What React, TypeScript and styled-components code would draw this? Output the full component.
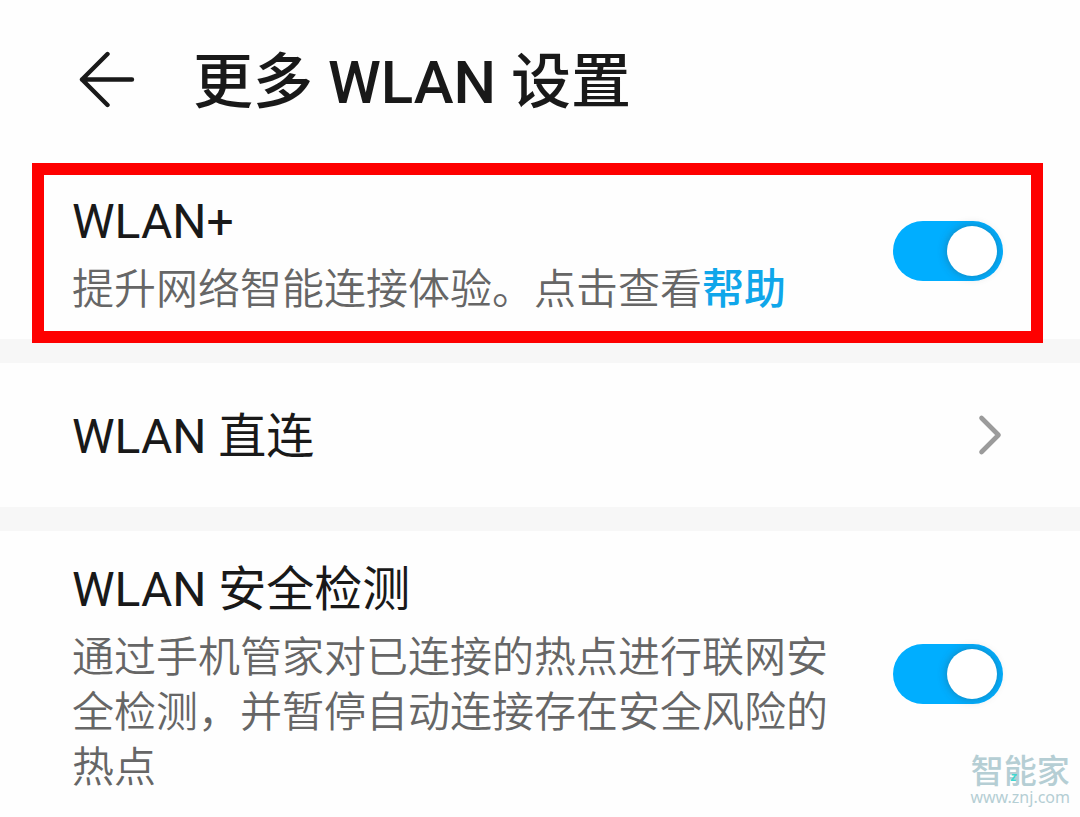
import React from 'react';
import styled, { createGlobalStyle } from 'styled-components';

const GlobalStyle = createGlobalStyle`
  *, *::before, *::after { box-sizing: border-box; }
  body {
    margin: 0;
    background: #fefefe;
    color: #191919;
    font-family: Roboto, "Noto Sans CJK SC", sans-serif;
  }
`;

const Page = styled.main`
  position: relative;
  display: flex;
  flex-direction: column;
  min-height: 100vh;
`;

const Header = styled.header`
  display: flex;
  align-items: center;
  gap: 57px;
  padding: 35px 72px;
  margin-bottom: 5px;
`;

const BackButton = styled.button`
  display: flex;
  padding: 0;
  margin-left: 6px;
  border: 0;
  background: none;
  color: inherit;
  cursor: pointer;
`;

const Title = styled.h1`
  margin: 0;
  padding-top: 8px;
  font-size: 60px;
  font-weight: 500;
  line-height: 80px;
`;

const Highlight = styled.div`
  position: relative;
  z-index: 1;
  margin: 0 37px -4px 32px;
  padding: 9px 28px 14px;
  border: 12px solid #fe0000;
`;

const Section = styled.section`
  padding: 21px 77px 20px 72px;
`;

const Row = styled.div`
  display: flex;
  align-items: center;
  gap: 60px;
`;

const LinkRow = styled.a`
  display: flex;
  align-items: center;
  justify-content: space-between;
  padding: 38px 77px 38px 72px;
  color: inherit;
  text-decoration: none;
`;

const Texts = styled.div`
  flex: 1;
  display: flex;
  flex-direction: column;
  gap: 8px;
  padding-top: 6px;
`;

const Label = styled.label`
  font-size: 48px;
  line-height: 64px;
`;

const LinkLabel = styled.span`
  padding-top: 4px;
  font-size: 48px;
  line-height: 64px;
`;

const Description = styled.p`
  margin: 0;
  color: #666;
  font-size: 42px;
  font-weight: 350;
  line-height: 55px;
`;

const HelpLink = styled.a`
  color: #0fa6ea;
  font-weight: 500;
  text-decoration: none;
`;

const Toggle = styled.input`
  appearance: none;
  flex: none;
  display: flex;
  align-items: center;
  width: 110px;
  height: 60px;
  margin: 0;
  padding: 0 6px;
  border-radius: 30px;
  background: #ccc;
  cursor: pointer;

  &::before {
    content: "";
    width: 50px;
    height: 50px;
    border-radius: 50%;
    background: #fff;
    box-shadow: 0 0 10px rgba(60, 60, 60, 0.4);
  }

  &:checked {
    justify-content: flex-end;
    background: #00aeff;
  }
`;

const Divider = styled.hr`
  width: 100%;
  height: 24px;
  margin: 0;
  border: 0;
  background: #f7f7f7;
`;

const Watermark = styled.aside`
  position: absolute;
  right: 10px;
  bottom: 11px;
  display: flex;
  flex-direction: column;
  align-items: center;
  color: #b5ced4;
`;

const Brand = styled.span`
  position: relative;
  font-size: 33px;
  font-weight: 500;
  line-height: 32px;
`;

const BrandMark = styled.span`
  position: absolute;
  left: 40px;
  top: 15px;
  color: #3fd6d0;
  font-size: 12px;
  font-style: italic;
  font-weight: 700;
  line-height: 12px;
`;

const Site = styled.span`
  font-family: "Noto Sans", sans-serif;
  font-size: 16px;
  line-height: 18px;
`;

export default function App() {
  return (
    <>
      <GlobalStyle />
      <Page>
        <Header>
          <BackButton aria-label="返回">
            <svg width="58" height="58" viewBox="0 0 58 58" fill="none" stroke="currentColor" strokeWidth="4.4" strokeLinecap="round" strokeLinejoin="round">
              <path d="M29.5 4 4 29.5 29.5 55M4 29.5H54" />
            </svg>
          </BackButton>
          <Title>更多 WLAN 设置</Title>
        </Header>

        <Highlight>
          <Row>
            <Texts>
              <Label htmlFor="wlan-plus">WLAN+</Label>
              <Description>
                提升网络智能连接体验。点击查看<HelpLink href="#help">帮助</HelpLink>
              </Description>
            </Texts>
            <Toggle id="wlan-plus" type="checkbox" defaultChecked />
          </Row>
        </Highlight>
        <Divider />

        <LinkRow href="#wlan-direct">
          <LinkLabel>WLAN 直连</LinkLabel>
          <svg width="26" height="42" viewBox="0 0 26 42" fill="none" stroke="#9b9b9b" strokeWidth="4.6" strokeLinecap="round" strokeLinejoin="round">
            <path d="M4.5 4 21.5 21 4.5 38" />
          </svg>
        </LinkRow>
        <Divider />

        <Section>
          <Row>
            <Texts>
              <Label htmlFor="wlan-security">WLAN 安全检测</Label>
              <Description>
                通过手机管家对已连接的热点进行联网安全检测，并暂停自动连接存在安全风险的热点
              </Description>
            </Texts>
            <Toggle id="wlan-security" type="checkbox" defaultChecked />
          </Row>
        </Section>

        <Watermark>
          <Brand>
            智能家<BrandMark>z</BrandMark>
          </Brand>
          <Site>www.znj.com</Site>
        </Watermark>
      </Page>
    </>
  );
}
